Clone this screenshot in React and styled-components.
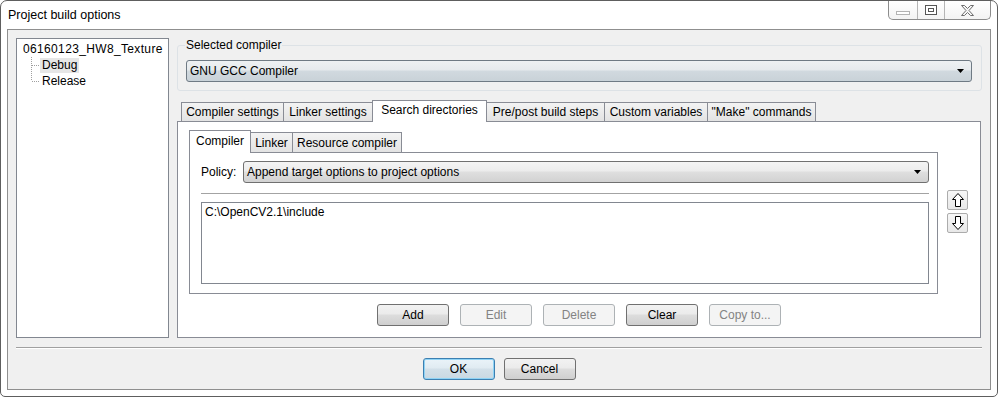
import React from "react";
import styled, { createGlobalStyle, css } from "styled-components";

const Global = createGlobalStyle`
  html, body { margin: 0; padding: 0; background: #ffffff; }
  body { font-family: "Liberation Sans", Arial, sans-serif; font-size: 12px; color: #000; }
  * { box-sizing: border-box; }
`;

const Window = styled.div`
  width: 998px;
  height: 397px;
  border: 1px solid #5e5e5e;
  border-radius: 7px 7px 5px 5px;
  background: #ffffff;
  display: flex;
  flex-direction: column;
  overflow: hidden;
`;

const TitleBar = styled.div`
  height: 28px;
  display: flex;
  align-items: flex-start;
  justify-content: space-between;
  flex: none;
`;

const Title = styled.div`
  padding: 7px 0 0 7px;
  font-size: 12.5px;
  line-height: 14px;
  color: #000;
`;

const CaptionButtons = styled.div`
  display: flex;
  height: 19px;
  margin-right: 6px;
  border: 1px solid #8c8c8c;
  border-top: none;
  border-radius: 0 0 5px 5px;
  background: linear-gradient(#ffffff, #f3f3f3);
  overflow: hidden;
`;

const CaptionButton = styled.div`
  width: ${(p) => p.w}px;
  height: 100%;
  display: flex;
  align-items: center;
  justify-content: center;
  border-left: ${(p) => (p.first ? "none" : "1px solid #b5b5b5")};
`;

const Client = styled.div`
  flex: 1;
  margin: 0 6px 6px 6px;
  border: 1px solid #8f8f8f;
  background: #f0f0f0;
  padding: 8px 8px 9px 8px;
  display: flex;
  flex-direction: column;
`;

const MainRow = styled.div`
  display: flex;
  gap: 8px;
  height: 300px;
  flex: none;
`;

const Tree = styled.div`
  width: 153px;
  height: 100%;
  border: 1px solid #828790;
  background: #ffffff;
  padding: 2px 0 0 6px;
`;

const TreeRoot = styled.div`
  height: 16px;
  line-height: 16px;
  white-space: nowrap;
  letter-spacing: 0.35px;
`;

const TreeChild = styled.div`
  display: flex;
  height: 16px;
  align-items: center;
  margin-left: 8px;
`;

const TreeLabel = styled.span`
  line-height: 15px;
  height: 15px;
  padding: 0 2px;
  background: ${(p) => (p.selected ? "#e6e6e6" : "transparent")};
`;

const RightCol = styled.div`
  flex: 1;
  display: flex;
  flex-direction: column;
  min-width: 0;
`;

const GroupBox = styled.fieldset`
  margin: 0;
  padding: 0 9px 8px 8px;
  border: 1px solid #dde2e6;
  border-radius: 3px;
  min-width: 0;
`;

const Legend = styled.legend`
  padding: 0 1px;
  margin-left: -1px;
  line-height: 14px;
  font-size: 12px;
`;

const Combo = styled.div`
  height: 22px;
  border: 1px solid #707070;
  border-radius: 3px;
  display: flex;
  align-items: center;
  justify-content: space-between;
  padding: 0 7px 0 3px;
  ${(p) =>
    p.tint
      ? css`
          margin-top: 8px;
          border-color: #6f7a84;
          background: linear-gradient(#eef1f3 0%, #e6eaed 45%, #d1d9df 50%, #c9d2d8 100%);
        `
      : css`
          background: linear-gradient(#f4f4f4 0%, #ececec 45%, #dfdfdf 50%, #d2d2d2 100%);
        `}
`;

const TabStrip = styled.div`
  display: flex;
  align-items: flex-end;
  height: 21px;
  margin-top: 9px;
  padding-left: ${(p) => p.pad}px;
  flex: none;
`;

const Tab = styled.div`
  width: ${(p) => p.w}px;
  margin-left: -1px;
  border: 1px solid #898c95;
  border-bottom: none;
  display: flex;
  align-items: center;
  justify-content: center;
  white-space: nowrap;
  position: relative;
  ${(p) =>
    p.active
      ? css`
          height: ${p.h + 3}px;
          margin-bottom: -1px;
          background: #ffffff;
          z-index: 1;
          padding-bottom: 3px;
        `
      : css`
          height: ${p.h}px;
          background: linear-gradient(#f3f3f3, #e3e3e3);
        `}
  &:first-child { margin-left: 0; }
`;

const TabPanel = styled.div`
  height: 217px;
  margin-right: 1px;
  border: 1px solid #898c95;
  background: #ffffff;
  padding-top: 8px;
  display: flex;
  flex-direction: column;
`;

const InnerRow = styled.div`
  display: flex;
  gap: 9px;
  margin-left: 11px;
`;

const InnerTabs = styled.div`
  width: 749px;
  display: flex;
  flex-direction: column;
`;

const InnerStrip = styled.div`
  display: flex;
  align-items: flex-end;
  height: 22px;
`;

const InnerPanel = styled.div`
  height: 142px;
  border: 1px solid #898c95;
  background: #ffffff;
  padding: 8px 8px 0 11px;
`;

const PolicyRow = styled.div`
  display: grid;
  grid-template-columns: 42px 1fr;
  align-items: center;
`;

const Separator = styled.div`
  height: 1px;
  margin-top: 10px;
  background: #a3a3a3;
`;

const ListBox = styled.div`
  margin-top: 8px;
  height: 82px;
  border: 1px solid #828790;
  padding: 2px 3px;
  line-height: 14px;
  background: #fff;
`;

const ArrowCol = styled.div`
  display: flex;
  flex-direction: column;
  gap: 3px;
  margin-top: 60px;
`;

const ArrowButton = styled.div`
  width: 21px;
  height: 20px;
  border: 1px solid #acacac;
  border-radius: 2px;
  background: linear-gradient(#f7f7f7, #e8e8e8);
  display: flex;
  align-items: center;
  justify-content: center;
`;

const ButtonRow = styled.div`
  display: flex;
  justify-content: center;
  gap: ${(p) => p.gap}px;
  margin-top: ${(p) => p.mt}px;
`;

const Button = styled.div`
  width: 72px;
  height: 22px;
  border-radius: 3px;
  display: flex;
  align-items: center;
  justify-content: center;
  ${(p) =>
    p.disabled
      ? css`
          border: 1px solid #adb2b5;
          background: #f4f4f4;
          color: #838383;
        `
      : p.primary
      ? css`
          border: 1px solid #3c7fb1;
          box-shadow: inset 0 0 0 1px #8fd3f5;
          background: linear-gradient(#eaf3f9 0%, #e0ebf2 45%, #d3e0e9 50%, #c9d8e2 100%);
        `
      : css`
          border: 1px solid #707070;
          background: linear-gradient(#f2f2f2 0%, #ebebeb 45%, #dddddd 50%, #cfcfcf 100%);
        `}
`;

const EtchedLine = styled.div`
  height: 2px;
  margin-top: 9px;
  border-top: 1px solid #a0a0a0;
  border-bottom: 1px solid #ffffff;
  flex: none;
`;

const DropArrow = () => (
  <svg width="7" height="4" viewBox="0 0 7 4">
    <polygon points="0,0 7,0 3.5,4" fill="#000" />
  </svg>
);

const Connector = ({ last }) => (
  <svg width="9" height="16" viewBox="0 0 9 16" style={{ flex: "none" }}>
    <line x1="0.5" y1="0" x2="0.5" y2={last ? 8 : 16} stroke="#a0a0a0" strokeDasharray="1 1" />
    <line x1="1" y1="8.5" x2="9" y2="8.5" stroke="#a0a0a0" strokeDasharray="1 1" />
  </svg>
);

const UpArrow = () => (
  <svg width="12" height="14" viewBox="0 0 12 14">
    <polygon points="6,0.5 11.5,6.5 8.5,6.5 8.5,13.5 3.5,13.5 3.5,6.5 0.5,6.5" fill="#fff" stroke="#000" strokeWidth="1" />
  </svg>
);

const DownArrow = () => (
  <svg width="12" height="14" viewBox="0 0 12 14">
    <polygon points="6,13.5 11.5,7.5 8.5,7.5 8.5,0.5 3.5,0.5 3.5,7.5 0.5,7.5" fill="#fff" stroke="#000" strokeWidth="1" />
  </svg>
);

const MinIcon = () => (
  <svg width="14" height="5" viewBox="0 0 14 5" style={{ marginTop: 6 }}>
    <rect x="0.5" y="0.5" width="13" height="3" fill="#fff" stroke="#b3b3b3" />
  </svg>
);

const MaxIcon = () => (
  <svg width="12" height="10" viewBox="0 0 12 10">
    <rect x="0.5" y="0.5" width="11" height="9" fill="#fff" stroke="#555" />
    <rect x="3.5" y="3.5" width="5" height="3" fill="none" stroke="#555" />
  </svg>
);

const CloseIcon = () => (
  <svg width="13" height="11" viewBox="0 0 13 11">
    <polygon
      points="0.5,0.5 3.5,0.5 6.5,3.5 9.5,0.5 12.5,0.5 8,5.5 12.5,10.5 9.5,10.5 6.5,7.5 3.5,10.5 0.5,10.5 5,5.5"
      fill="#f4f4f4"
      stroke="#6d6d6d"
    />
  </svg>
);

const outerTabs = [
  { label: "Compiler settings", w: 103 },
  { label: "Linker settings", w: 90 },
  { label: "Search directories", w: 115, active: true },
  { label: "Pre/post build steps", w: 119 },
  { label: "Custom variables", w: 104 },
  { label: '"Make" commands', w: 109 },
];

const innerTabs = [
  { label: "Compiler", w: 62, active: true },
  { label: "Linker", w: 43 },
  { label: "Resource compiler", w: 110 },
];

const actions = [
  { label: "Add" },
  { label: "Edit", disabled: true },
  { label: "Delete", disabled: true },
  { label: "Clear" },
  { label: "Copy to...", disabled: true },
];

export default function App() {
  return (
    <>
      <Global />
      <Window>
        <TitleBar>
          <Title>Project build options</Title>
          <CaptionButtons>
            <CaptionButton w={28} first>
              <MinIcon />
            </CaptionButton>
            <CaptionButton w={27}>
              <MaxIcon />
            </CaptionButton>
            <CaptionButton w={46}>
              <CloseIcon />
            </CaptionButton>
          </CaptionButtons>
        </TitleBar>
        <Client>
          <MainRow>
            <Tree>
              <TreeRoot>06160123_HW8_Texture</TreeRoot>
              <TreeChild>
                <Connector />
                <TreeLabel selected>Debug</TreeLabel>
              </TreeChild>
              <TreeChild>
                <Connector last />
                <TreeLabel>Release</TreeLabel>
              </TreeChild>
            </Tree>
            <RightCol>
              <GroupBox>
                <Legend>Selected compiler</Legend>
                <Combo tint>
                  <span>GNU GCC Compiler</span>
                  <DropArrow />
                </Combo>
              </GroupBox>
              <TabStrip pad={4}>
                {outerTabs.map((t) => (
                  <Tab key={t.label} w={t.w} h={19} active={t.active}>
                    {t.label}
                  </Tab>
                ))}
              </TabStrip>
              <TabPanel>
                <InnerRow>
                  <InnerTabs>
                    <InnerStrip>
                      {innerTabs.map((t) => (
                        <Tab key={t.label} w={t.w} h={20} active={t.active}>
                          {t.label}
                        </Tab>
                      ))}
                    </InnerStrip>
                    <InnerPanel>
                      <PolicyRow>
                        <span>Policy:</span>
                        <Combo>
                          <span>Append target options to project options</span>
                          <DropArrow />
                        </Combo>
                      </PolicyRow>
                      <Separator />
                      <ListBox>C:\OpenCV2.1\include</ListBox>
                    </InnerPanel>
                  </InnerTabs>
                  <ArrowCol>
                    <ArrowButton>
                      <UpArrow />
                    </ArrowButton>
                    <ArrowButton>
                      <DownArrow />
                    </ArrowButton>
                  </ArrowCol>
                </InnerRow>
                <ButtonRow gap={11} mt={10}>
                  {actions.map((a) => (
                    <Button key={a.label} disabled={a.disabled}>
                      {a.label}
                    </Button>
                  ))}
                </ButtonRow>
              </TabPanel>
            </RightCol>
          </MainRow>
          <EtchedLine />
          <ButtonRow gap={9} mt={9}>
            <Button primary>OK</Button>
            <Button>Cancel</Button>
          </ButtonRow>
        </Client>
      </Window>
    </>
  );
}
